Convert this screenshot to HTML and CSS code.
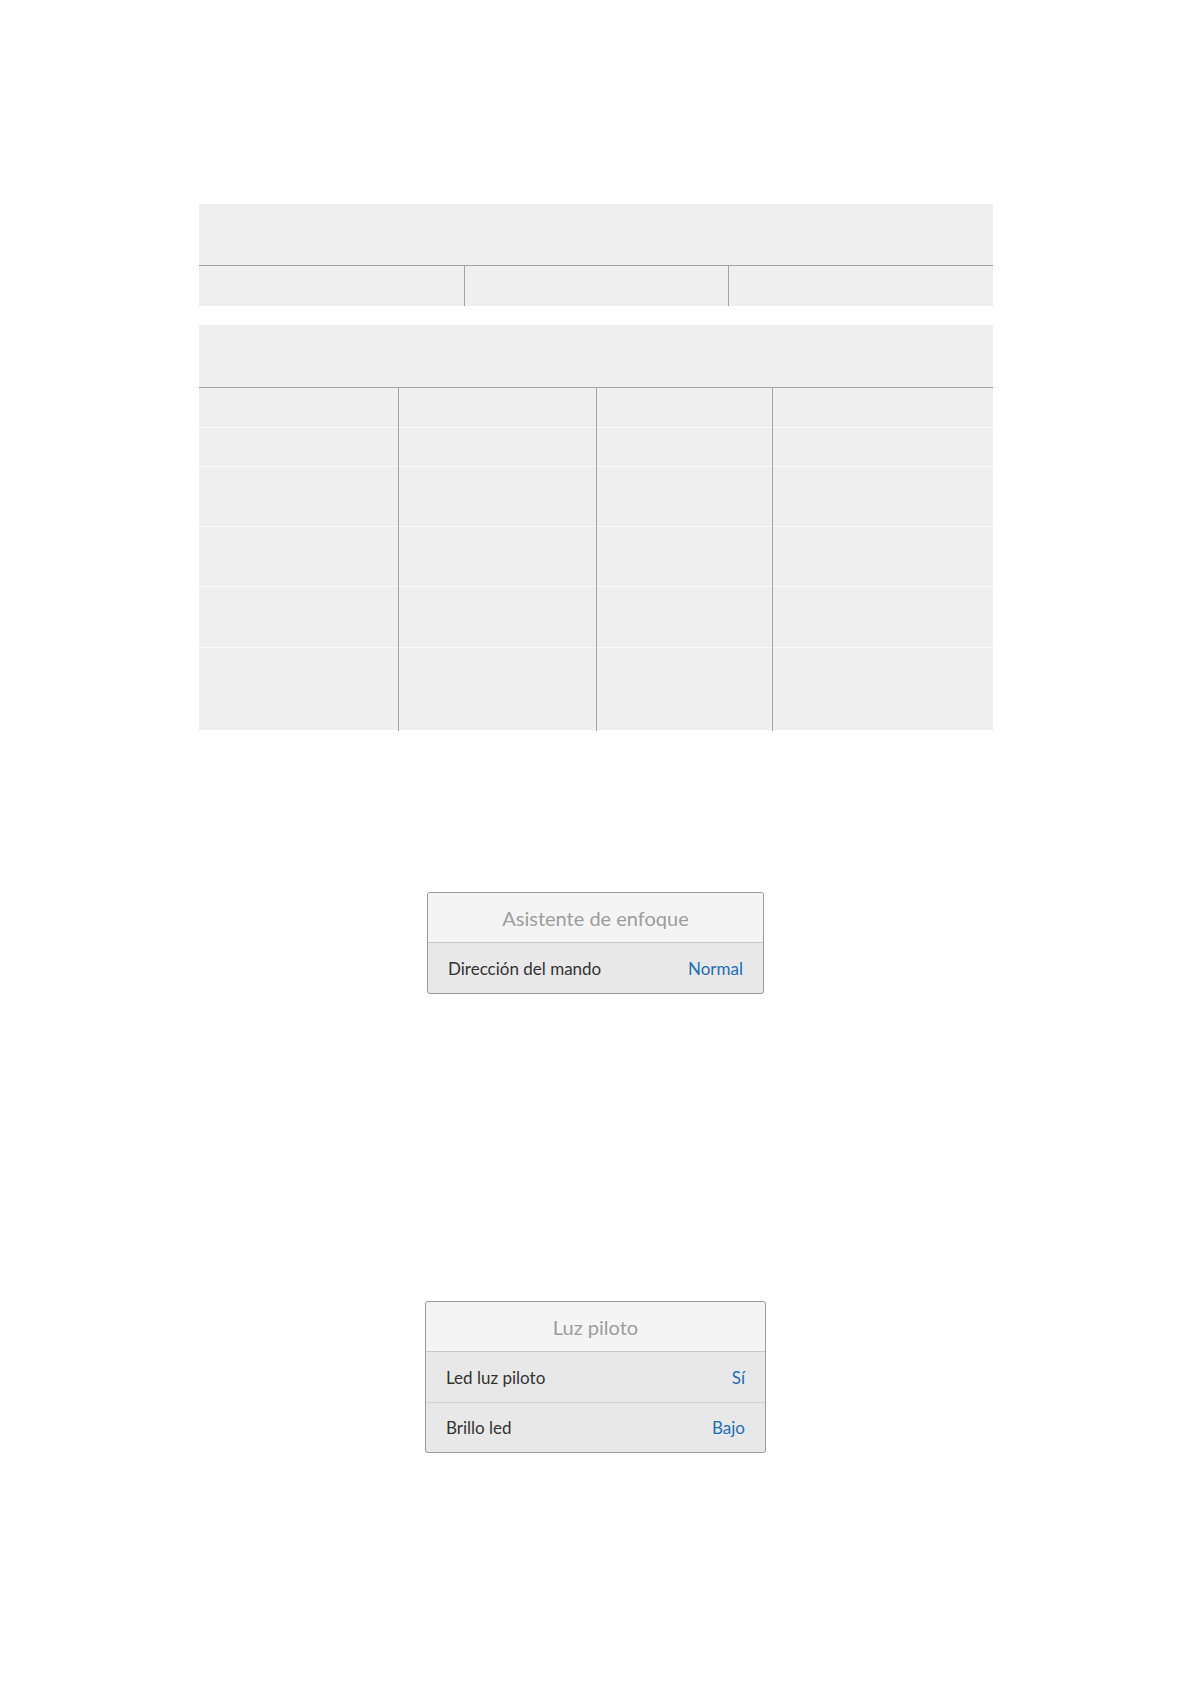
FILE: index.html
```html
<!DOCTYPE html>
<html>
<head>
    <title>Ajustes</title>
    <link rel="stylesheet" href="styles.css">
</head>
<body>
    <div class="page">
        <div class="tabla tabla-uno">
            <div class="cabecera"></div>
            <div class="fila fila-40">
                <div class="celda"></div>
                <div class="celda"></div>
                <div class="celda"></div>
            </div>
        </div>

        <div class="tabla tabla-dos">
            <div class="cabecera alta"></div>
            <div class="fila fila-40"><div class="celda"></div><div class="celda"></div><div class="celda"></div><div class="celda"></div></div>
            <div class="fila fila-39"><div class="celda"></div><div class="celda"></div><div class="celda"></div><div class="celda"></div></div>
            <div class="fila fila-60"><div class="celda"></div><div class="celda"></div><div class="celda"></div><div class="celda"></div></div>
            <div class="fila fila-60"><div class="celda"></div><div class="celda"></div><div class="celda"></div><div class="celda"></div></div>
            <div class="fila fila-61"><div class="celda"></div><div class="celda"></div><div class="celda"></div><div class="celda"></div></div>
            <div class="fila fila-82 ultima"><div class="celda"></div><div class="celda"></div><div class="celda"></div><div class="celda"></div></div>
        </div>

        <div class="menu menu-enfoque">
            <div class="menu-titulo">Asistente de enfoque</div>
            <div class="menu-fila">
                <span class="etiqueta">Dirección del mando</span>
                <span class="valor">Normal</span>
            </div>
        </div>

        <div class="menu menu-luz">
            <div class="menu-titulo">Luz piloto</div>
            <div class="menu-fila">
                <span class="etiqueta">Led luz piloto</span>
                <span class="valor">Sí</span>
            </div>
            <div class="menu-fila">
                <span class="etiqueta">Brillo led</span>
                <span class="valor">Bajo</span>
            </div>
        </div>
    </div>
</body>
</html>
```

FILE: styles.css
```css
* {
    box-sizing: border-box;
}

body {
    margin: 0;
    background: #fff;
    font-family: Lato, "Noto Sans", sans-serif;
}

.page {
    display: flex;
    flex-direction: column;
    align-items: center;
    padding-top: 204px;
}

.tabla {
    width: 794px;
    background: #efefef;
}

.tabla-dos {
    margin-top: 19px;
}

.cabecera {
    height: 62px;
    border-bottom: 1px solid #a4a4a4;
}

.cabecera.alta {
    height: 63px;
}

.fila {
    display: grid;
    border-bottom: 1px solid #fafafa;
}

.fila.ultima {
    border-bottom: none;
}

.tabla-uno .fila {
    grid-template-columns: 265px 264px 265px;
    border-bottom: none;
}

.tabla-dos .fila {
    grid-template-columns: 199px 198px 176px 221px;
}

.celda + .celda {
    border-left: 1px solid #a4a4a4;
}

.tabla-dos .fila .celda + .celda {
    margin-bottom: -1px;
}

.fila-39 { height: 39px; }
.fila-40 { height: 40px; }
.fila-60 { height: 60px; }
.fila-61 { height: 61px; }
.fila-82 { height: 82px; }

.menu {
    border: 1px solid #9c9c9c;
    border-radius: 3px;
    background: #e8e8e8;
    overflow: hidden;
    box-shadow: 0 0 1px rgb(0 0 0 / 15%);
}

.menu-enfoque {
    width: 337px;
    margin-top: 162px;
}

.menu-luz {
    width: 341px;
    margin-top: 307px;
}

.menu-titulo {
    height: 50px;
    display: flex;
    align-items: center;
    justify-content: center;
    background: #f4f4f4;
    border-bottom: 1px solid #c9c9c9;
    color: #9d9d9d;
    font-size: 20px;
}

.menu-fila {
    height: 50px;
    display: flex;
    align-items: center;
    justify-content: space-between;
    padding: 0 20px 0 20px;
    font-size: 17px;
}

.menu-fila + .menu-fila {
    border-top: 1px solid #d2d2d2;
}

.etiqueta {
    color: #333;
}

.valor {
    color: #1f6db5;
}
```
